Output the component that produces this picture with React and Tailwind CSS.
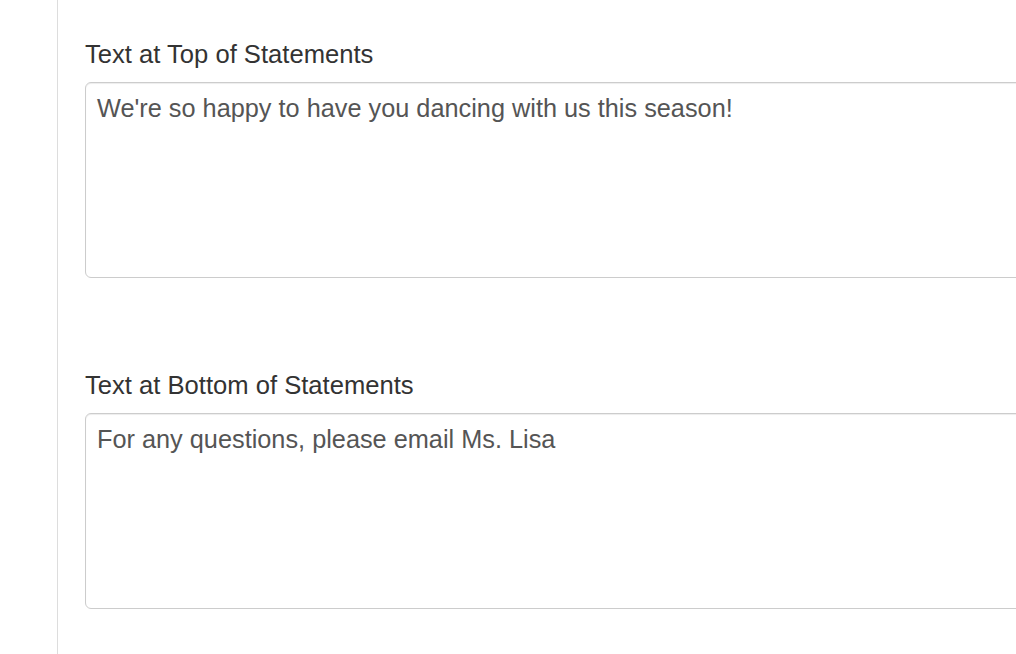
import React from "react";

// Campo de texto con etiqueta
const StatementField = ({ label, value, className = "" }) => (
    <div className={className}>
        <label className="block text-[25.6px] leading-9 text-[#333] font-normal">
            {label}
        </label>
        <textarea
            readOnly
            defaultValue={value}
            className="mt-[10px] block w-[1000px] h-[196px] resize-none rounded-[6px] border border-[#ccc] bg-white px-[11px] pt-[7px] text-[25.3px] leading-9 text-[#555] shadow-[inset_0_1px_1px_rgba(0,0,0,0.075)] outline-none"
            style={{ fontFamily: '"Liberation Sans", Arial, sans-serif' }}
        />
    </div>
);

const App = () => {
    return (
        <div
            className="h-[654px] w-[1016px] overflow-hidden bg-white flex"
            style={{ fontFamily: '"Liberation Sans", Arial, sans-serif' }}
        >
            {/* Columna lateral */}
            <div className="w-[58px] shrink-0 border-r border-[#ddd]"></div>

            {/* Contenido principal */}
            <div className="pl-[27px] pt-[36px]">
                <StatementField
                    label="Text at Top of Statements"
                    value="We're so happy to have you dancing with us this season!"
                />
                <StatementField
                    className="mt-[89px]"
                    label="Text at Bottom of Statements"
                    value="For any questions, please email Ms. Lisa"
                />
            </div>
        </div>
    );
};

export default App;
